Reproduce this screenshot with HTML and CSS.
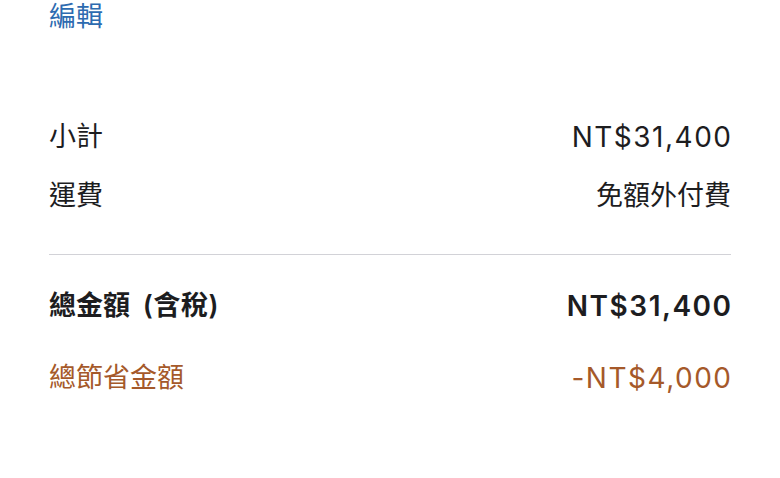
FILE: index.html
```html
<!DOCTYPE html>
<html lang="zh-Hant">
<head>
<meta charset="utf-8">
<link rel="stylesheet" href="styles.css">
</head>
<body>
<div class="page">
  <a class="edit" href="#">編輯</a>
  <div class="rows">
    <div class="row r1"><span>小計</span><span class="amt">NT$31,400</span></div>
    <div class="row r2"><span>運費</span><span>免額外付費</span></div>
  </div>
  <hr class="divider">
  <div class="row total"><span>總金額 <span class="paren">(含稅)</span></span><span class="amt">NT$31,400</span></div>
  <div class="row savings"><span>總節省金額</span><span class="amt">-NT$4,000</span></div>
</div>
</body>
</html>
```
FILE: styles.css
```css
html, body {
  margin: 0;
  padding: 0;
  background: #fff;
}
.page {
  padding: 0 49px;
  font-family: Inter, "Noto Sans CJK TC", sans-serif;
  font-size: 27px;
  color: #1d1d1f;
}
.edit {
  display: block;
  height: 34px;
  line-height: 34px;
  color: #2d6bb0;
  text-decoration: none;
}
.rows {
  padding-top: 86px;
}
.row {
  display: flex;
  justify-content: space-between;
  align-items: center;
  height: 34px;
  line-height: 34px;
}
.amt {
  font-size: 28px;
  letter-spacing: 1.5px;
  margin-right: -1.5px;
}
.paren {
  margin-left: 6px;
  letter-spacing: 0.5px;
}
.r2 {
  margin-top: 25px;
}
.divider {
  border: 0;
  border-top: 1.5px solid #d2d2d7;
  margin: 41px 0 0 0;
  height: 0;
}
.total {
  margin-top: 34px;
  font-weight: 600;
}
.savings {
  margin-top: 38px;
  color: #a5592a;
}
```
